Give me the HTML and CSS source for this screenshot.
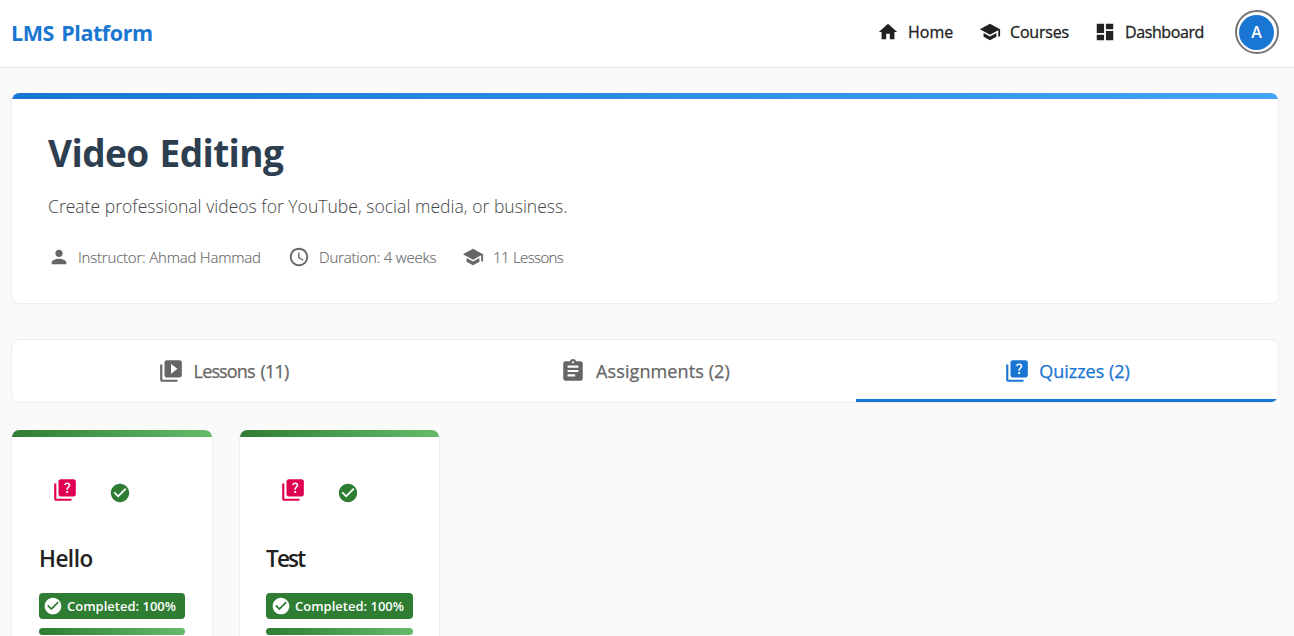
FILE: index.html
```html
<!DOCTYPE html>
<html lang="en">
<head>
<meta charset="utf-8">
<title>LMS Platform</title>
<link rel="stylesheet" href="styles.css">
</head>
<body>
<svg class="sprite" aria-hidden="true">
  <symbol id="home" viewBox="0 0 24 24"><path d="M10 20v-6h4v6h5v-8h3L12 3 2 12h3v8z"/></symbol>
  <symbol id="school" viewBox="0 0 24 24"><path d="M5 13.18v4L12 21l7-3.82v-4L12 17zM12 3 1 9l11 6 9-4.91V17h2V9z"/></symbol>
  <symbol id="dashboard" viewBox="0 0 24 24"><path d="M3 13h8V3H3zm0 8h8v-6H3zm10 0h8V11h-8zm0-18v6h8V3z"/></symbol>
  <symbol id="person" viewBox="0 0 24 24"><path d="M12 12c2.21 0 4-1.79 4-4s-1.79-4-4-4-4 1.79-4 4 1.79 4 4 4m0 2c-2.67 0-8 1.34-8 4v2h16v-2c0-2.66-5.33-4-8-4"/></symbol>
  <symbol id="clock" viewBox="0 0 24 24"><path d="M11.99 2C6.47 2 2 6.48 2 12s4.47 10 9.99 10C17.52 22 22 17.52 22 12S17.52 2 11.99 2M12 20c-4.42 0-8-3.58-8-8s3.58-8 8-8 8 3.58 8 8-3.58 8-8 8"/><path d="M12.5 7H11v6l5.25 3.15.75-1.23-4.5-2.67z"/></symbol>
  <symbol id="video" viewBox="0 0 24 24"><path d="M4 6H2v14c0 1.1.9 2 2 2h14v-2H4zm16-4H8c-1.1 0-2 .9-2 2v12c0 1.1.9 2 2 2h12c1.1 0 2-.9 2-2V4c0-1.1-.9-2-2-2m-8 12.5v-9l6 4.5z"/></symbol>
  <symbol id="assignment" viewBox="0 0 24 24"><path d="M19 3h-4.18C14.4 1.84 13.3 1 12 1s-2.4.84-2.82 2H5c-1.1 0-2 .9-2 2v14c0 1.1.9 2 2 2h14c1.1 0 2-.9 2-2V5c0-1.1-.9-2-2-2m-7 0c.55 0 1 .45 1 1s-.45 1-1 1-1-.45-1-1 .45-1 1-1m2 14H7v-2h7zm3-4H7v-2h10zm0-4H7V7h10z"/></symbol>
  <symbol id="quiz" viewBox="0 0 24 24"><path d="M4 6H2v14c0 1.1.9 2 2 2h14v-2H4zm16-4H8c-1.1 0-2 .9-2 2v12c0 1.1.9 2 2 2h12c1.1 0 2-.9 2-2V4c0-1.1-.9-2-2-2m-5.99 13c-.59 0-1.05-.47-1.05-1.05 0-.59.47-1.04 1.05-1.04.59 0 1.04.45 1.04 1.04-.01.58-.45 1.05-1.04 1.05m2.5-6.17c-.63.93-1.23 1.21-1.56 1.81-.13.24-.18.4-.18 1.18h-1.52c0-.41-.06-1.08.26-1.65.41-.73 1.18-1.16 1.63-1.8.48-.68.21-1.94-1.14-1.94-.88 0-1.32.67-1.5 1.23l-1.37-.57C11.51 5.96 12.52 5 13.99 5c1.23 0 2.08.56 2.51 1.26.37.61.58 1.73.01 2.57"/></symbol>
  <symbol id="check" viewBox="0 0 24 24"><path d="M12 2C6.48 2 2 6.48 2 12s4.48 10 10 10 10-4.48 10-10S17.52 2 12 2m-2 15-5-5 1.41-1.41L10 14.17l7.59-7.59L19 8z"/></symbol>
</svg>

<header class="header">
  <a class="brand">LMS Platform</a>
  <nav class="nav">
    <a class="nav-link nav-home"><svg class="icon"><use href="#home"/></svg>Home</a>
    <a class="nav-link nav-courses"><svg class="icon"><use href="#school"/></svg>Courses</a>
    <a class="nav-link nav-dashboard"><svg class="icon"><use href="#dashboard"/></svg>Dashboard</a>
    <button class="avatar-ring"><span class="avatar">A</span></button>
  </nav>
</header>

<main class="content">
  <section class="course">
    <h1 class="course-title">Video Editing</h1>
    <p class="course-text">Create professional videos for YouTube, social media, or business.</p>
    <div class="meta">
      <div class="meta-item meta-instructor"><svg class="icon"><use href="#person"/></svg>Instructor: Ahmad Hammad</div>
      <div class="meta-item meta-duration"><svg class="icon"><use href="#clock"/></svg>Duration: 4 weeks</div>
      <div class="meta-item meta-lessons"><svg class="icon"><use href="#school"/></svg>11 Lessons</div>
    </div>
  </section>

  <div class="tabs">
    <div class="tab tab-lessons"><svg class="icon-lg"><use href="#video"/></svg>Lessons (11)</div>
    <div class="tab tab-assignments"><svg class="icon-lg"><use href="#assignment"/></svg>Assignments (2)</div>
    <div class="tab tab-active"><svg class="icon-lg"><use href="#quiz"/></svg>Quizzes (2)</div>
  </div>

  <div class="cards">
    <article class="card">
      <div class="card-icons"><svg class="icon-lg quiz-icon"><use href="#quiz"/></svg><svg class="icon done-icon"><use href="#check"/></svg></div>
      <h2 class="card-title">Hello</h2>
      <div class="chip"><svg class="icon-sm"><use href="#check"/></svg>Completed: 100%</div>
      <div class="progress"></div>
    </article>
    <article class="card card-narrow">
      <div class="card-icons"><svg class="icon-lg quiz-icon"><use href="#quiz"/></svg><svg class="icon done-icon"><use href="#check"/></svg></div>
      <h2 class="card-title">Test</h2>
      <div class="chip"><svg class="icon-sm"><use href="#check"/></svg>Completed: 100%</div>
      <div class="progress"></div>
    </article>
  </div>
</main>
</body>
</html>
```
FILE: styles.css
```css
* { box-sizing: border-box; }
body {
  margin: 0;
  background: #fafafa;
  color: #212121;
  font-family: "Open Sans", "Noto Sans", sans-serif;
}
svg { fill: currentColor; flex: none; display: block; }
.sprite { display: none; }
.icon { width: 22px; height: 22px; }
.icon-lg { width: 26px; height: 26px; }
.icon-sm { width: 20px; height: 20px; }

.header {
  height: 68px;
  padding: 0 15px 3px 11px;
  display: flex;
  align-items: center;
  justify-content: space-between;
  background: #fff;
  border-bottom: 1px solid #ebebeb;
}
.brand { color: #1976d2; font-size: 21.5px; font-weight: 700; letter-spacing: -0.42px; word-spacing: 2px; margin-right: -2px; white-space: nowrap; }
.nav { display: flex; align-items: center; }
.nav-link { display: flex; align-items: center; gap: 9px; font-size: 16px; font-weight: 500; -webkit-text-stroke: 0.3px; white-space: nowrap; }
.nav-home { width: 102px; }
.nav-courses { width: 115px; letter-spacing: -0.2px; }
.nav-dashboard { width: 141px; letter-spacing: -0.4px; }
.avatar-ring {
  width: 44px;
  height: 44px;
  padding: 0;
  display: flex;
  align-items: center;
  justify-content: center;
  border: 2px solid #757575;
  border-radius: 50%;
  background: #fff;
  font: inherit;
}
.avatar {
  width: 35px;
  height: 35px;
  margin: 1px 1px 0 0;
  border-radius: 50%;
  background: #1976d2;
  color: #fff;
  font-size: 16px;
  font-weight: 600;
  line-height: 34px;
  text-align: center;
}

.content { padding: 25px 15px 0 11px; }
.course {
  height: 211px;
  padding: 30px 36px;
  background: linear-gradient(90deg, #1976d2, #42a5f5) 0 0 / 100% 6px no-repeat #fff;
  background-origin: border-box;
  border: 1px solid #ededed;
  border-top: 0;
  border-radius: 8px;
}
.course-title { margin: 0; font-size: 37px; line-height: 60px; font-weight: 700; letter-spacing: -0.6px; word-spacing: 2px; color: #2c3e50; }
.course-text { margin: 9px 0 0; font-size: 17.5px; line-height: 28px; font-weight: 300; letter-spacing: 0.03px; color: #444; }
.meta { display: flex; margin-top: 26px; color: #666; }
.meta-item { display: flex; align-items: center; gap: 8px; font-size: 15px; line-height: 22px; font-weight: 300; letter-spacing: -0.2px; white-space: nowrap; -webkit-text-stroke: 0.15px; }
.meta-instructor { width: 240px; }
.meta-duration { width: 174px; gap: 9px; }
.meta-lessons { gap: 9px; letter-spacing: -0.65px; word-spacing: 1px; }

.tabs {
  height: 64px;
  margin-top: 35px;
  display: grid;
  grid-template-columns: repeat(3, 1fr);
  background: #fff;
  border: 1px solid #ededed;
  border-radius: 8px;
  overflow: hidden;
}
.tab {
  display: flex;
  align-items: center;
  justify-content: center;
  gap: 9px;
  padding-top: 2px;
  border-bottom: 3px solid transparent;
  font-size: 18px;
  font-weight: 500;
  -webkit-text-stroke: 0.25px;
  color: #666;
}
.tab-lessons { letter-spacing: -0.85px; word-spacing: 2px; gap: 10px; }
.tab-assignments { letter-spacing: 0.1px; gap: 10px; }
.tab-active { color: #1976d2; border-bottom-color: #1976d2; }

.cards { display: flex; gap: 26px; margin-top: 27px; }
.card {
  width: 202px;
  height: 206px;
  padding: 47px 27px 0;
  background: linear-gradient(90deg, #2e7d32, #66bb6a) 0 0 / 100% 7px no-repeat #fff;
  background-origin: border-box;
  border: 1px solid #ededed;
  border-width: 0 1px;
  border-radius: 8px 8px 0 0;
}
.card-icons { height: 28px; padding-left: 13px; display: flex; gap: 31px; }
.quiz-icon { color: #e00052; }
.done-icon { color: #2e7d32; margin-top: 5px; }
.card-title { margin: 38px 0 0; font-size: 22.5px; line-height: 32px; font-weight: 600; letter-spacing: -0.5px; }
.chip {
  height: 26px;
  margin-top: 18px;
  padding-left: 4px;
  display: flex;
  align-items: center;
  gap: 4px;
  border-radius: 4px;
  background: #2e7d32;
  color: #fff;
  font-size: 13px;
  font-weight: 600;
  white-space: nowrap;
}
.progress { height: 7px; margin-top: 9px; border-radius: 4px; background: linear-gradient(90deg, #2e7d32, #66bb6a); }
.card-narrow { width: 201px; padding: 47px 26px 0; }
.card-narrow .card-icons { padding-left: 14px; }
.card-narrow .card-title { letter-spacing: -1.8px; }
.card-narrow .chip { padding-left: 5px; }
```
